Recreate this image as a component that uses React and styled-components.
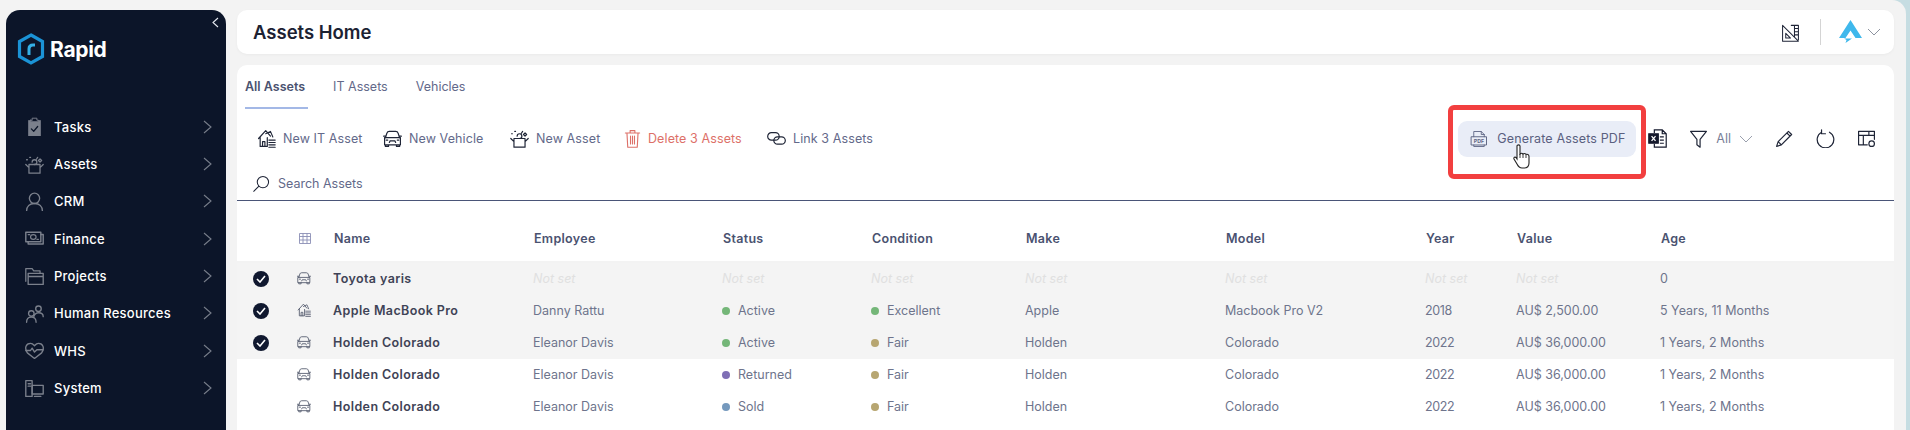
import React from "react";
import styled, { createGlobalStyle, css } from "styled-components";

const GlobalStyle = createGlobalStyle`
  html, body {
    margin: 0;
    height: 430px;
    overflow: hidden;
    background: #c6dde2;
    font-family: Inter, "Noto Sans", Arial, sans-serif;
  }
  * { box-sizing: border-box; }
`;

const Page = styled.div`
  display: flex;
  width: 1906px;
  height: 430px;
  padding: 10px 0 0 6px;
  overflow: hidden;
  background: #f3f3f3;
  border-radius: 0 14px 0 0;
`;

const Sidebar = styled.aside`
  position: relative;
  flex: 0 0 220px;
  height: 420px;
  background: #0c1529;
  border-radius: 14px 14px 0 0;
  padding: 23px 14px 0 11px;
  color: #fff;
`;

const Collapse = styled.svg`
  position: absolute;
  top: 7px;
  right: 7px;
`;

const Logo = styled.div`
  display: flex;
  align-items: center;
  gap: 5px;
  height: 32px;
  font-size: 21px;
  font-weight: 700;
  letter-spacing: -0.3px;
`;

const Nav = styled.nav`
  display: flex;
  flex-direction: column;
  margin-top: 43px;
  padding-left: 8px;
`;

const NavItem = styled.div`
  display: flex;
  align-items: center;
  height: 37.35px;
  gap: 10px;
  font-size: 13px;
  font-weight: 500;
  letter-spacing: 0.25px;
  span { flex: 1; }
  svg { flex: none; }
`;

const Content = styled.main`
  flex: 0 0 1657px;
  margin-left: 11px;
  display: flex;
  flex-direction: column;
  gap: 11px;
`;

const Header = styled.header`
  display: flex;
  align-items: center;
  height: 44px;
  padding: 0 13px 0 16px;
  background: #fff;
  border-radius: 10px;
  box-shadow: 0 1px 3px rgba(0, 0, 0, 0.04);
`;

const Title = styled.h1`
  flex: 1;
  margin: 0;
  font-size: 18.5px;
  font-weight: 600;
  color: #1c2233;
`;

const Divider = styled.div`
  width: 1px;
  height: 26px;
  margin: 0 18px 0 20px;
  background: #d4d4d4;
`;

const HeaderChevron = styled.svg`
  margin-left: 5px;
`;

const Panel = styled.section`
  flex: 1;
  background: #fff;
  border-radius: 10px 10px 0 0;
`;

const Tabs = styled.div`
  display: flex;
  gap: 25px;
  padding: 0 8px;
  height: 44px;
`;

const Tab = styled.div`
  display: flex;
  align-items: center;
  height: 44px;
  padding: 0 3px 0 0;
  font-size: 12.5px;
  font-weight: ${(p) => (p.$active ? 600 : 400)};
  color: ${(p) => (p.$active ? "#4a5270" : "#63698a")};
  border-bottom: 2px solid ${(p) => (p.$active ? "#a3b8e6" : "transparent")};
`;

const Toolbar = styled.div`
  display: flex;
  align-items: center;
  height: 59px;
  padding: 0 18px 0 20px;
`;

const Action = styled.div`
  display: flex;
  align-items: center;
  flex: 0 0 ${(p) => p.$width}px;
  gap: ${(p) => (p.$danger ? 6 : 7)}px;
  font-size: 12.5px;
  letter-spacing: 0.1px;
  color: ${(p) => (p.$danger ? "#dd7068" : "#63698a")};
  white-space: nowrap;
`;

const ToolbarRight = styled.div`
  margin-left: auto;
  display: flex;
  align-items: center;
  gap: 22px;
`;

const PdfButton = styled.div`
  position: relative;
  display: flex;
  align-items: center;
  gap: 9px;
  width: 178px;
  height: 36px;
  margin-right: -10px;
  padding-left: 12px;
  background: #e9edf7;
  border-radius: 9px;
  font-size: 12.5px;
  letter-spacing: 0.15px;
  color: #5a6080;
  white-space: nowrap;
`;

const Highlight = styled.div`
  position: absolute;
  top: -16px;
  left: -10px;
  right: -10px;
  bottom: -22px;
  border: 5px solid #f23f3f;
  border-radius: 6px;
`;

const Cursor = styled.svg`
  position: absolute;
  left: 55px;
  top: 23px;
`;

const FilterGroup = styled.div`
  display: flex;
  align-items: center;
  gap: 8px;
  font-size: 12.5px;
  color: #7a8098;
`;

const SearchRow = styled.div`
  display: flex;
  align-items: center;
  gap: 8px;
  height: 34px;
  padding: 0 16px;
  margin-top: -1px;
  font-size: 12.5px;
  color: #63698a;
  border-bottom: 1px solid #4a5578;
`;

const columns = css`
  display: grid;
  grid-template-columns: 60px 36px 200px 189px 149px 154px 200px 200px 91px 144px 1fr;
  align-items: center;
`;

const HeadRow = styled.div`
  ${columns}
  height: 62px;
  padding-top: 15px;
  border-bottom: 2px solid #f3f3f3;
  font-size: 12.5px;
  font-weight: 600;
  color: #4a5270;
  letter-spacing: 0.3px;
`;

const HeadCell = styled.div`
  margin-left: 1px;
`;

const GridGlyph = styled.svg`
  margin-left: 2px;
`;

const Row = styled.div`
  ${columns}
  height: 32px;
  font-size: 12.5px;
  color: #6e748c;
  background: ${(p) => (p.$selected ? "#f4f4f4" : "#fff")};
`;

const Check = styled.div`
  justify-self: start;
  margin-left: 16px;
  width: 16px;
  height: 16px;
  display: flex;
  align-items: center;
  justify-content: center;
  border-radius: 50%;
  background: #10182f;
`;

const KindIcon = styled.div`
  display: flex;
  padding-bottom: 3px;
`;

const Name = styled.div`
  font-weight: 600;
  color: #3f4356;
  letter-spacing: 0.4px;
  padding-bottom: 2px;
`;

const Cell = styled.div`
  padding-bottom: 1px;
  letter-spacing: ${(p) => p.$spacing || 0}px;
`;

const NotSet = styled.div`
  padding-bottom: 1px;
  font-style: italic;
  color: #e0e0e0;
`;

const StatusCell = styled.div`
  display: flex;
  align-items: center;
  gap: 8px;
  padding-bottom: 1px;
`;

const Dot = styled.i`
  width: 8px;
  height: 8px;
  border-radius: 50%;
  background: ${(p) => p.$color};
`;

const line = { fill: "none", stroke: "currentColor", strokeWidth: 1.2, strokeLinecap: "round", strokeLinejoin: "round" };

const Icon = ({ size = 18, color = "#8a8f9c", children, ...rest }) => (
  <svg width={size} height={size} viewBox="0 0 24 24" color={color} {...line} {...rest}>
    {children}
  </svg>
);

const Chevron = ({ color = "#777d8a" }) => (
  <svg width="9" height="14" viewBox="0 0 9 14" fill="none" stroke={color} strokeWidth="1.1">
    <path d="M1 1l7 6-7 6" />
  </svg>
);

const Clipboard = (p) => (
  <Icon {...p}>
    <path d="M4 4h16v20H4z" fill="currentColor" stroke="none" />
    <path d="M9 4V1.500h6V4h2v2H7V4z" fill="#0c1529" stroke="currentColor" />
    <path d="M8 15l3 3 5-6" stroke="#0c1529" strokeWidth="1.600" />
  </Icon>
);

const Box = (p) => (
  <Icon {...p}>
    <path d="M5 12h14v11H5zM1 12l4 4M23 12l-4 4" strokeWidth="1.600" />
    <path d="M9 9a3 3 0 1 1 3 3M14 6l2-3M19 5l2 2-2 2-2-2zM2 6h1M6 3h1" strokeWidth="1.600" />
  </Icon>
);

const Person = (p) => (
  <Icon {...p}>
    <circle cx="12" cy="8" r="6.500" strokeWidth="1.700" />
    <path d="M2 24c0-6 4-9.500 10-9.500S22 18 22 24" strokeWidth="1.700" />
  </Icon>
);

const Cash = (p) => (
  <Icon {...p}>
    <path d="M1 4h19v12H1z" strokeWidth="1.800" />
    <path d="M4 16v3h19V7h-3" strokeWidth="1.800" />
    <ellipse cx="10.500" cy="10" rx="3.500" ry="3" strokeWidth="1.500" />
    <path d="M4 7h2M15 13h2" strokeWidth="1.500" />
  </Icon>
);

const Folder = (p) => (
  <Icon {...p}>
    <path d="M1 18V2h8l2 3h8v3" strokeWidth="1.600" />
    <path d="M4 22V8h19v14zM4 12h19" strokeWidth="1.700" />
  </Icon>
);

const People = (p) => (
  <Icon {...p}>
    <circle cx="17" cy="6" r="3.500" strokeWidth="1.700" />
    <path d="M11 17c0-3 2.500-6 6-6s6 2 6 5" strokeWidth="1.700" />
    <circle cx="8" cy="12" r="3.500" strokeWidth="1.700" />
    <path d="M2 23c0-4 2.500-6.500 6-6.500s6 2.500 6 6.500" strokeWidth="1.700" />
  </Icon>
);

const Heart = (p) => (
  <Icon {...p}>
    <path d="M3 15C-1 9 1 3 7 3c3 0 4 2 5 3 1-1 2-3 5-3 6 0 8 6 4 12l-9 7z" strokeWidth="1.700" />
    <path d="M1 12h6l2-3 3 5 3-3h8" strokeWidth="1.700" />
  </Icon>
);

const Devices = (p) => (
  <Icon {...p}>
    <path d="M1 2h8v20H1zM4 6h3M4 9h3" strokeWidth="1.700" />
    <path d="M9 8h14v11H9zM12 22h8" strokeWidth="1.700" />
  </Icon>
);

const navItems = [
  ["Tasks", Clipboard],
  ["Assets", Box],
  ["CRM", Person],
  ["Finance", Cash],
  ["Projects", Folder],
  ["Human Resources", People],
  ["WHS", Heart],
  ["System", Devices],
];

const Car = ({ size = 20, color = "#1f2537" }) => (
  <Icon size={size} color={color}>
    <path d="M3 11l2-6c.4-1.300 1.300-2 3-2h8c1.700 0 2.600.7 3 2l2 6" strokeWidth="1.500" />
    <path d="M2 11h20v9H2zM3 20v2h4v-2M17 20v2h4v-2M0.800 9h2.400M20.800 9h2.400M8 17l1-2h6l1 2M4 14h2M18 14h2" strokeWidth="1.500" />
  </Icon>
);

const Building = ({ size = 19, color = "#1f2537" }) => (
  <Icon size={size} color={color}>
    <path d="M2 12L11 2l6 7M4 10v12h9V11M7 22v-6h3v6" strokeWidth="1.500" />
    <path d="M11 6l6-3 3 7M15 14h8M15 17h8M15 20h8M15 23h8" strokeWidth="1.400" />
  </Icon>
);

const PdfIcon = () => (
  <Icon size={18} color="#5f6784">
    <path d="M5 9V2h10l4 4v3M5 20v2h14v-2M15 2v4h4" />
    <path d="M2 9h20v11H2z" strokeWidth="1.300" />
    <text x="12" y="17" fontSize="7" fontWeight="700" textAnchor="middle" fill="#5f6784" stroke="none">PDF</text>
  </Icon>
);

const rows = [
  { selected: true, icon: "car", name: "Toyota yaris", age: "0" },
  {
    selected: true, icon: "it", name: "Apple MacBook Pro", employee: "Danny Rattu",
    status: ["Active", "#74b678"], condition: ["Excellent", "#74b678"],
    make: "Apple", model: "Macbook Pro V2", year: "2018", value: "AU$ 2,500.00", age: "5 Years, 11 Months",
  },
  {
    selected: true, icon: "car", name: "Holden Colorado", employee: "Eleanor Davis",
    status: ["Active", "#74b678"], condition: ["Fair", "#b7a671"],
    make: "Holden", model: "Colorado", year: "2022", value: "AU$ 36,000.00", age: "1 Years, 2 Months",
  },
  {
    icon: "car", name: "Holden Colorado", employee: "Eleanor Davis",
    status: ["Returned", "#7f6fb5"], condition: ["Fair", "#b7a671"],
    make: "Holden", model: "Colorado", year: "2022", value: "AU$ 36,000.00", age: "1 Years, 2 Months",
  },
  {
    icon: "car", name: "Holden Colorado", employee: "Eleanor Davis",
    status: ["Sold", "#7599bd"], condition: ["Fair", "#b7a671"],
    make: "Holden", model: "Colorado", year: "2022", value: "AU$ 36,000.00", age: "1 Years, 2 Months",
  },
];

const heads = ["Name", "Employee", "Status", "Condition", "Make", "Model", "Year", "Value", "Age"];

const Plain = ({ value, spacing }) =>
  value ? <Cell $spacing={spacing}>{value}</Cell> : <NotSet>Not set</NotSet>;

const Status = ({ value }) =>
  value ? (
    <StatusCell>
      <Dot $color={value[1]} />
      {value[0]}
    </StatusCell>
  ) : (
    <NotSet>Not set</NotSet>
  );

const App = () => (
  <Page>
    <GlobalStyle />
    <Sidebar>
      <Collapse width="7" height="11" viewBox="0 0 7 11" fill="none" stroke="#e6e9f0" strokeWidth="1.100">
        <path d="M6 1L1 5.500l5 4.500" />
      </Collapse>
      <Logo>
        <svg width="28" height="32" viewBox="0 0 28 32" fill="none">
          <path d="M14 2l11.500 6.500v15L14 30 2.500 23.500v-15z" stroke="#1b93d6" strokeWidth="3.200" />
          <path d="M12 22v-6c0-2.500 1.500-4 4-4h2" stroke="#35b0e6" strokeWidth="3" />
        </svg>
        Rapid
      </Logo>
      <Nav>
        {navItems.map(([label, NavIcon]) => (
          <NavItem key={label}>
            <NavIcon size={19} color="#7b808c" />
            <span>{label}</span>
            <Chevron />
          </NavItem>
        ))}
      </Nav>
    </Sidebar>
    <Content>
      <Header>
        <Title>Assets Home</Title>
        <Icon size={19} color="#1f2537">
          <path d="M2 3l20 20H2zM6 19h6l-6-6z" strokeWidth="1.300" />
          <path d="M13 3h9v18M17 3v14M17 7h5M17 11h5M17 15h5" strokeWidth="1.300" />
        </Icon>
        <Divider />
        <svg width="23" height="24" viewBox="0 0 23 24" fill="#3fb8ec">
          <path d="M11.500 0L23 18h-6.500l-5-7.500-5 7.500H0z" />
          <path d="M5 18.500h8L6.500 23l1-3z" />
        </svg>
        <HeaderChevron width="14" height="8" viewBox="0 0 14 8" fill="none" stroke="#8d93a0" strokeWidth="1">
          <path d="M1 1l6 6 6-6" />
        </HeaderChevron>
      </Header>
      <Panel>
        <Tabs>
          <Tab $active>All Assets</Tab>
          <Tab>IT Assets</Tab>
          <Tab>Vehicles</Tab>
        </Tabs>
        <Toolbar>
          <Action $width={126}>
            <Building />
            New IT Asset
          </Action>
          <Action $width={127}>
            <Car size={19} />
            New Vehicle
          </Action>
          <Action $width={113}>
            <Icon size={19} color="#1f2537">
              <path d="M5 12h14v11H5zM1 12l4 4M23 12l-4 4" strokeWidth="1.500" />
              <path d="M9 9a3 3 0 1 1 3 3M14 6l2-3M19 5l2 2-2 2-2-2zM2 6h1M6 3h1" strokeWidth="1.500" />
            </Icon>
            New Asset
          </Action>
          <Action $width={144} $danger>
            <Icon size={19} color="#dd7068">
              <path d="M3 5h18M9 5V2h6v3M5 5l1 18h12l1-18M9.500 9v10M12 9v10M14.500 9v10" strokeWidth="1.400" />
            </Icon>
            Delete 3 Assets
          </Action>
          <Action $width={104}>
            <svg width="19" height="13" viewBox="0 0 19 13" fill="none" stroke="#1f2537" strokeWidth="1.200">
              <rect x="0.700" y="0.700" width="11.500" height="7.400" rx="3.700" />
              <rect x="6.800" y="4.800" width="11.500" height="7.400" rx="3.700" />
            </svg>
            Link 3 Assets
          </Action>
          <ToolbarRight>
            <PdfButton>
              <Highlight />
              <PdfIcon />
              Generate Assets PDF
              <Cursor width="19" height="26" viewBox="0 0 19 26">
                <path
                  d="M4 2c0-1.500 3-1.500 3 0v8c1-1 2-1 3 0 1-.7 2-.7 3 .4 1-.5 3 0 3 2V19c0 3-2 5-5 5H9c-3 0-4-2-5-4l-3-5c-.6-1.500 1-2.500 2-1.500l1 1.500z"
                  fill="#fff"
                  stroke="#222"
                  strokeWidth="1.100"
                />
                <path d="M7 10v4M10 10v4M13 11v3" stroke="#222" strokeWidth="0.900" />
              </Cursor>
            </PdfButton>
            <svg width="19" height="19" viewBox="0 0 24 24" fill="none" stroke="#14192c" strokeWidth="1.500">
              <path d="M8 5V1h10l5 5v17H8v-4M18 1v5h5M15 10h5M15 14h5M15 18h5" />
              <path d="M1 6h12v12H1z" fill="#14192c" />
              <path d="M4.500 9l5 6M9.500 9l-5 6" stroke="#fff" strokeWidth="1.600" />
            </svg>
            <FilterGroup>
              <Icon size={19} color="#1f2537">
                <path d="M2 3h20l-8 10v10l-4-3v-7z" strokeWidth="1.500" />
              </Icon>
              All
              <svg width="14" height="8" viewBox="0 0 14 8" fill="none" stroke="#9aa0ad" strokeWidth="1">
                <path d="M1 1l6 6 6-6" />
              </svg>
            </FilterGroup>
            <Icon size={19} color="#1f2537">
              <path d="M2 22l2-6L17 3l4 4L8 20zM15 5l4 4M4 16l4 4" strokeWidth="1.500" />
            </Icon>
            <Icon size={19} color="#1f2537">
              <path d="M7 4a10.500 10.500 0 1 0 10 0M7 1v5h5" strokeWidth="1.500" />
            </Icon>
            <Icon size={19} color="#1f2537">
              <path d="M13 20H2V3h20v10M2 8h20M8 8v12M15 3v5" strokeWidth="1.500" />
              <circle cx="18.500" cy="18.500" r="3.500" strokeWidth="1.500" />
            </Icon>
          </ToolbarRight>
        </Toolbar>
        <SearchRow>
          <Icon size={17} color="#1f2537">
            <circle cx="14" cy="10" r="8" strokeWidth="1.500" />
            <path d="M8 16l-7 7" strokeWidth="1.500" />
          </Icon>
          Search Assets
        </SearchRow>
        <HeadRow>
          <span />
          <GridGlyph width="12" height="11" viewBox="0 0 12 11" fill="none" stroke="#8b8fb5" strokeWidth="0.900">
            <path d="M.5.5h11v10H.5zM.5 3.500h11M.5 7h11M4 .5v10M8 .5v10" />
          </GridGlyph>
          {heads.map((h) => (
            <HeadCell key={h}>{h}</HeadCell>
          ))}
        </HeadRow>
        {rows.map((r, i) => (
          <Row key={i} $selected={r.selected}>
            {r.selected ? (
              <Check>
                <svg width="10" height="8" viewBox="0 0 10 8" fill="none" stroke="#fff" strokeWidth="1.600">
                  <path d="M1 4l3 3 5-6" />
                </svg>
              </Check>
            ) : (
              <span />
            )}
            <KindIcon>
              {r.icon === "car" ? <Car size={14} color="#555b6e" /> : <Building size={14} color="#555b6e" />}
            </KindIcon>
            <Name>{r.name}</Name>
            <Plain value={r.employee} />
            <Status value={r.status} />
            <Status value={r.condition} />
            <Plain value={r.make} />
            <Plain value={r.model} />
            <Plain value={r.year} spacing={-0.4} />
            <Plain value={r.value} />
            <Plain value={r.age} />
          </Row>
        ))}
      </Panel>
    </Content>
  </Page>
);

export default App;
